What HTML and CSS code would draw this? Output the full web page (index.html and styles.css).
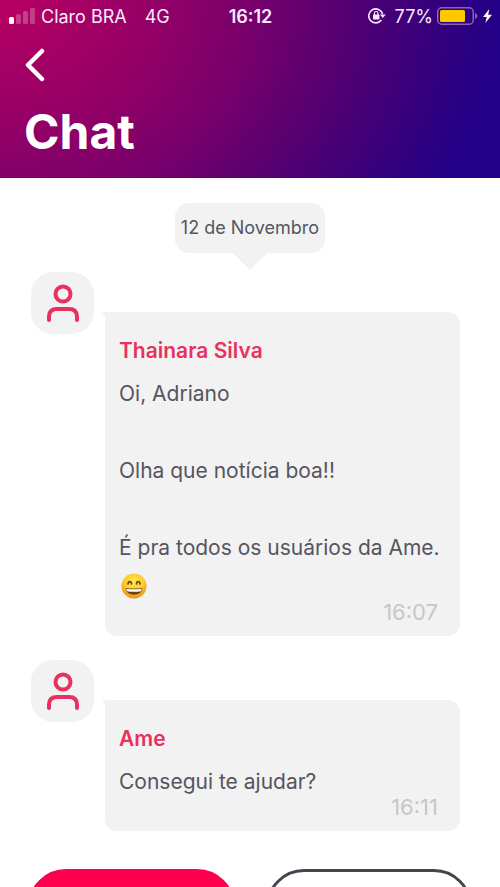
FILE: index.html
```html
<!DOCTYPE html>
<html lang="pt-BR">
<head>
<meta charset="utf-8">
<meta name="viewport" content="width=device-width, initial-scale=1">
<title>Chat</title>
<link rel="stylesheet" href="styles.css">
</head>
<body>
<div class="app">
  <header class="header">
    <div class="status">
      <div class="status-side">
        <svg class="signal" width="27" height="16" viewBox="0 0 27 16" aria-hidden="true">
          <rect x="0" y="9" width="5" height="7" rx="1.5" fill="#fff"/>
          <g fill="#fff" opacity=".24"><rect x="7" y="6" width="5" height="10" rx="1.5"/><rect x="14" y="3" width="5" height="13" rx="1.5"/><rect x="21" y="0" width="5" height="16" rx="1.5"/></g>
        </svg>
        <span>Claro BRA</span>
        <span class="network">4G</span>
      </div>
      <time class="clock">16:12</time>
      <div class="status-side status-end">
        <svg class="lock" width="18" height="18" viewBox="0 0 18 18" fill="none" stroke="#fbe9ff" aria-hidden="true">
          <path d="M14.500 7A7 7 0 1 0 13.400 13" stroke-width="1.6"/>
          <path d="M11.800 7.400h6L14.800 11z" fill="#fbe9ff" stroke="none"/>
          <rect x="5" y="7.600" width="6.400" height="4.800" rx=".6" fill="#fbe9ff" stroke="none"/>
          <path d="M6.400 8V6.300a1.800 1.800 0 0 1 3.600 0V8" stroke-width="1.200"/>
        </svg>
        <span class="percent">77%</span>
        <svg class="battery" width="41" height="18" viewBox="0 0 41 18" aria-hidden="true">
          <rect x=".75" y=".75" width="35.5" height="16.5" rx="4" fill="none" stroke="#8f62b0" stroke-width="1.5"/>
          <rect x="3" y="3" width="25" height="12" rx="1.5" fill="#fdc800"/>
          <path d="M38 6q2.500 1 2.500 3t-2.500 3z" fill="#8f62b0"/>
        </svg>
        <svg width="9" height="14" viewBox="0 0 9 14" aria-hidden="true"><path d="M6.300 0 0 8h3.700L2.300 14 9 5.700H5.200z" fill="#fff"/></svg>
      </div>
    </div>
    <button class="back" type="button" aria-label="Voltar">
      <svg width="20" height="34" viewBox="0 0 20 34" fill="none" stroke="#fff" stroke-width="4.500" stroke-linecap="round" stroke-linejoin="round" aria-hidden="true"><path d="M17 3 3 17l14 14"/></svg>
    </button>
    <h1 class="title">Chat</h1>
  </header>

  <main class="chat">
    <div class="date">12 de Novembro</div>

    <article class="message">
      <div class="avatar">
        <svg width="32" height="38" viewBox="0 0 32 38" fill="none" stroke="#e8315f" stroke-width="4" stroke-linecap="round" aria-hidden="true"><circle cx="16" cy="10" r="7.500"/><path d="M2 36v-3.500Q2 25 10 25h12q8 0 8 7.500V36"/></svg>
      </div>
      <div class="bubble">
        <h2 class="name">Thainara Silva</h2>
        <div class="text">
          <p>Oi, Adriano</p>
          <p>Olha que notícia boa!!</p>
          <p>É pra todos os usuários da Ame.
            <svg class="emoji" width="26" height="26" viewBox="0 0 26 26" role="img" aria-label="Rosto sorridente">
              <defs>
                <radialGradient id="face" cx=".5" cy=".35" r=".65"><stop offset="0" stop-color="#ffe94a"/><stop offset=".6" stop-color="#fccb2d"/><stop offset="1" stop-color="#ee8b16"/></radialGradient>
              </defs>
              <circle cx="13" cy="13" r="12.500" fill="url(#face)"/>
              <g fill="none" stroke="#653b10" stroke-width="1.600" stroke-linecap="round"><path d="M7 11q.4-2.500 1.800-2.500T10.600 11"/><path d="M15.400 11q.4-2.500 1.800-2.500T19 11"/></g>
              <path d="M4.500 15q8.500 1.200 17 0-.8 6.800-8.500 6.800T4.500 15z" fill="#70400f"/>
              <path d="M5.300 15.800q7.700 1 15.400 0l-.7 2.400q-7 1.200-14 0z" fill="#fff"/>
            </svg>
          </p>
        </div>
        <time class="time">16:07</time>
      </div>
    </article>

    <article class="message">
      <div class="avatar">
        <svg width="32" height="38" viewBox="0 0 32 38" fill="none" stroke="#e8315f" stroke-width="4" stroke-linecap="round" aria-hidden="true"><circle cx="16" cy="10" r="7.500"/><path d="M2 36v-3.500Q2 25 10 25h12q8 0 8 7.500V36"/></svg>
      </div>
      <div class="bubble">
        <h2 class="name">Ame</h2>
        <div class="text"><p>Consegui te ajudar?</p></div>
        <time class="time">16:11</time>
      </div>
    </article>

    <div class="actions">
      <button class="action action-primary" type="button" aria-label="Sim"></button>
      <button class="action" type="button" aria-label="Não"></button>
    </div>
  </main>
</div>
</body>
</html>
```
FILE: styles.css
```css
* {
  box-sizing: border-box;
}

body,
h1,
h2,
p {
  margin: 0;
}

body {
  font-family: Inter, "Liberation Sans", sans-serif;
  color: #55555f;
  background: #fff;
}

svg {
  display: block;
  flex: none;
}

button {
  padding: 0;
  border: 0;
  background: none;
  cursor: pointer;
}

.app {
  display: flex;
  flex-direction: column;
  height: 100vh;
  overflow: hidden;
}

.header {
  flex: none;
  padding-bottom: 18px;
  color: #fff;
  background: radial-gradient(ellipse 100% 230% at 0 0, #b80062 0%, #980066 28%, #7c006b 48%, #5a0070 66%, #3c007a 83%, #220088 100%);
}

.status {
  display: grid;
  grid-template-columns: 1fr auto 1fr;
  align-items: center;
  height: 32px;
  padding: 0 8px 0 9px;
  font-size: 18px;
  color: #fbe9ff;
}

.status-side {
  display: flex;
  align-items: center;
}

.status-end {
  justify-content: flex-end;
}

.signal {
  margin-right: 5px;
}

.network {
  margin-left: 18px;
}

.clock {
  font-weight: 600;
}

.lock {
  margin-right: 9px;
}

.percent {
  margin-right: 4px;
}

.battery {
  margin-right: 5px;
}

.back {
  display: block;
  margin: 16px 0 0 25px;
}

.title {
  margin: 22px 24px 0;
  font-size: 48px;
  line-height: 56px;
  font-weight: 700;
}

.chat {
  flex: 1;
  min-height: 0;
  overflow: hidden;
  padding: 25px 28px 0;
}

.date {
  position: relative;
  width: fit-content;
  margin: 0 auto 19px;
  padding: 0 6px;
  border-radius: 14px;
  font-size: 18px;
  line-height: 50px;
  background: #f2f2f2;
}

.date::after {
  content: "";
  position: absolute;
  top: 100%;
  left: 50%;
  margin-left: -17px;
  border: 17px solid transparent;
  border-top-color: #f2f2f2;
  border-bottom: 0;
}

.message {
  display: flex;
  align-items: flex-start;
  gap: 11px;
  margin: 0 12px 24px 3px;
}

.avatar {
  display: grid;
  place-items: center;
  flex: none;
  width: 63px;
  height: 62px;
  border-radius: 22px;
  background: #f2f2f2;
}

.bubble {
  position: relative;
  flex: 1;
  margin-top: 40px;
  padding: 19px 14px 12px;
  border-radius: 0 12px 12px 12px;
  background: #f2f2f2;
}

.bubble::before {
  content: "";
  position: absolute;
  top: 0;
  left: -3px;
  border-top: 4px solid #f2f2f2;
  border-left: 3px solid transparent;
}

.name {
  margin-bottom: 4px;
  font-size: 21px;
  line-height: 39px;
  font-weight: 600;
  color: #e8315f;
}

.text {
  display: grid;
  gap: 38px;
  font-size: 21px;
  line-height: 39px;
}

.emoji {
  display: inline-block;
  margin-left: 2px;
  vertical-align: -5px;
}

.time {
  display: block;
  margin: -6px 8px 0;
  font-size: 22px;
  line-height: 24px;
  text-align: right;
  color: #c6c6ca;
}

.actions {
  display: grid;
  grid-template-columns: 1fr 1fr;
  gap: 31px;
  margin-top: 38px;
}

.action {
  height: 76px;
  border: 3px solid #454550;
  border-radius: 38px;
  background: #fff;
}

.action-primary {
  border-color: #ff0050;
  background: #ff0050;
}
```
